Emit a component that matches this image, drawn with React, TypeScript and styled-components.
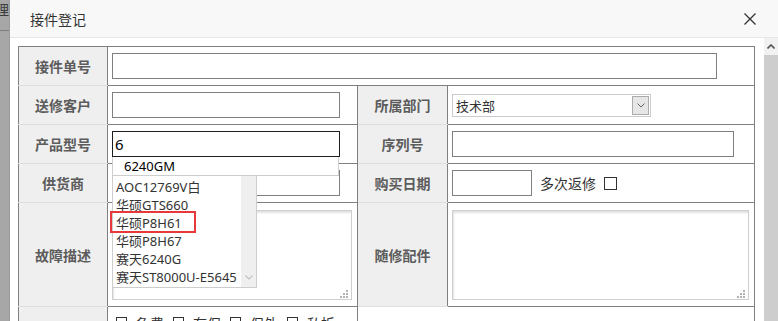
import React from "react";
import styled, { createGlobalStyle } from "styled-components";

const GlobalStyle = createGlobalStyle`
  html, body {
    margin: 0;
    padding: 0;
    background: #fff;
    overflow: hidden;
  }
  body {
    font-family: "Noto Sans", "Noto Sans CJK SC", sans-serif;
  }
`;

const Page = styled.div`
  display: flex;
  width: 778px;
  height: 321px;
  overflow: hidden;
`;

// серый фон страницы за модальным окном
const Backdrop = styled.div`
  width: 10px;
  flex: none;
  background: #a7a7a7;
  border-right: 1px solid #9c9c9c;
  box-sizing: border-box;
  overflow: hidden;
`;

const BackdropText = styled.div`
  margin: 0 0 0 -5px;
  font-size: 14px;
  line-height: 20px;
  color: #3c3c3c;
`;

const BackdropRule = styled.div`
  margin-top: 10px;
  height: 1px;
  background: #7c7c7c;
`;

const Dialog = styled.div`
  flex: 1;
  display: flex;
  flex-direction: column;
  min-width: 0;
`;

const Header = styled.div`
  height: 37px;
  flex: none;
  display: flex;
  align-items: center;
  justify-content: space-between;
  padding: 0 22px 0 20px;
  background: #f8f8f8;
  border-bottom: 1px solid #e6e6e6;
`;

const Title = styled.span`
  font-size: 14px;
  color: #333;
`;

const CloseButton = styled.button`
  border: 0;
  padding: 0;
  background: none;
  width: 12px;
  height: 12px;
  display: flex;
  cursor: pointer;
`;

const Body = styled.div`
  flex: 1;
  display: flex;
  min-height: 0;
`;

const Content = styled.div`
  flex: 1;
  padding: 8px 10px 0 8px;
  overflow: hidden;
`;

const ScrollBar = styled.div`
  width: 14px;
  flex: none;
  display: flex;
  flex-direction: column;
`;

const ScrollArrow = styled.div`
  height: 17px;
  background: #f1f1f1;
  display: flex;
  align-items: center;
  justify-content: center;
`;

const ScrollTrack = styled.div`
  flex: 1;
  background: #cdcdcd;
`;

const FormTable = styled.table`
  border-collapse: collapse;
  table-layout: fixed;
  width: 737px;
`;

const Row = styled.tr<{ $h: number }>`
  height: ${(p) => p.$h}px;
`;

const Label = styled.th<{ $first?: boolean }>`
  background: #efefef;
  border: 1px solid #7f7f7f;
  border-top-color: ${(p) => (p.$first ? "#7f7f7f" : "#dedede")};
  border-bottom-color: #dedede;
  padding: 0;
  font-size: 14px;
  font-weight: 700;
  color: #5c5c5c;
  text-align: center;
`;

const Cell = styled.td<{ $top?: boolean }>`
  border: 1px solid #7f7f7f;
  padding: 0 4px;
  vertical-align: ${(p) => (p.$top ? "top" : "middle")};
`;

const CellInner = styled.div`
  display: flex;
  align-items: center;
`;

const InputWrap = styled.div`
  position: relative;
`;

const TextInput = styled.input<{ $w: number; $focus?: boolean }>`
  box-sizing: border-box;
  width: ${(p) => p.$w}px;
  height: 26px;
  margin: 0;
  padding: 0 2px;
  border: 1px solid ${(p) => (p.$focus ? "#1e1e1e" : "#7f7f7f")};
  outline: none;
  font-family: inherit;
  font-size: 15px;
  color: #000;
  background: #fff;
`;

const Select = styled.div`
  box-sizing: border-box;
  width: 199px;
  height: 23px;
  display: flex;
  align-items: center;
  padding: 0 1px 0 3px;
  border: 1px solid #cbcbcb;
  font-size: 13px;
  color: #333;
`;

const SelectButton = styled.span`
  box-sizing: border-box;
  margin-left: auto;
  width: 17px;
  height: 19px;
  display: flex;
  align-items: center;
  justify-content: center;
  background: #e6e6e6;
  border: 1px solid #ababab;
`;

const InlineText = styled.span`
  margin: 0 8px;
  font-size: 14px;
  color: #333;
  white-space: nowrap;
`;

const CheckBox = styled.span<{ $size: number }>`
  box-sizing: border-box;
  width: ${(p) => p.$size}px;
  height: ${(p) => p.$size}px;
  flex: none;
  border: 1px solid #333;
  background: #fff;
`;

const CheckGroup = styled.div`
  display: flex;
  align-items: flex-start;
  gap: 9px;
  padding: 8px 0 0 4px;
  font-size: 14px;
  line-height: 18px;
  color: #333;
`;

const TextareaWrap = styled.div<{ $w: number }>`
  position: relative;
  width: ${(p) => p.$w}px;
  height: 90px;
`;

const TextArea = styled.textarea`
  box-sizing: border-box;
  display: block;
  width: 100%;
  height: 100%;
  margin: 0;
  resize: none;
  border: 1px solid #cfcfcf;
  box-shadow: inset 1px 2px 2px #e2e2e2;
  outline: none;
`;

const Grip = styled.svg`
  position: absolute;
  right: 4px;
  bottom: 2px;
`;

// выпадающий список автодополнения
const Suggest = styled.div`
  position: absolute;
  top: 100%;
  left: 0;
  z-index: 5;
`;

const SuggestFirst = styled.div`
  box-sizing: border-box;
  width: 227px;
  height: 19px;
  padding-left: 11px;
  border: 1px solid #cdcdcd;
  border-top: 0;
  background: #fff;
  font-size: 13px;
  line-height: 18px;
  color: #000;
`;

const SuggestList = styled.div`
  position: relative;
  box-sizing: border-box;
  width: 145px;
  height: 112px;
  display: flex;
  border: 1px solid #cdcdcd;
  border-top: 0;
  background: #fff;
`;

const SuggestItems = styled.div`
  flex: 1;
  padding-top: 2px;
`;

const SuggestItem = styled.div`
  height: 18px;
  padding-left: 3px;
  font-size: 13px;
  line-height: 18px;
  color: #333;
  white-space: nowrap;
`;

const ListScroll = styled.div`
  width: 15px;
  background: #efefef;
  display: flex;
  align-items: flex-end;
  justify-content: center;
  padding-bottom: 7px;
  box-sizing: border-box;
`;

const Highlight = styled.div`
  position: absolute;
  left: -3px;
  top: 35px;
  box-sizing: border-box;
  width: 86px;
  height: 22px;
  border: 2px solid #e8393a;
`;

const suggestions = [
  "AOC12769V白",
  "华硕GTS660",
  "华硕P8H61",
  "华硕P8H67",
  "赛天6240G",
  "赛天ST8000U-E5645",
];

const flags = ["急费", "在保", "保外", "私拆"];

const GripDots = () => (
  <Grip width="8" height="8" viewBox="0 0 8 8">
    {[
      [6, 0],
      [3, 3],
      [6, 3],
      [0, 6],
      [3, 6],
      [6, 6],
    ].map(([x, y]) => (
      <rect key={`${x}-${y}`} x={x} y={y} width="2" height="2" fill="#b3b3b3" />
    ))}
  </Grip>
);

const App: React.FC = () => {
  return (
    <>
      <GlobalStyle />
      <Page>
        <Backdrop>
          <BackdropText>理</BackdropText>
          <BackdropRule />
        </Backdrop>
        <Dialog>
          <Header>
            <Title>接件登记</Title>
            <CloseButton aria-label="关闭">
              <svg width="12" height="12" viewBox="0 0 12 12">
                <path d="M0.5 0.5L11.5 11.5M11.5 0.5L0.5 11.5" stroke="#333" strokeWidth="1.3" />
              </svg>
            </CloseButton>
          </Header>
          <Body>
            <Content>
              <FormTable>
                <colgroup>
                  <col style={{ width: 89 }} />
                  <col style={{ width: 250 }} />
                  <col style={{ width: 90 }} />
                  <col style={{ width: 307 }} />
                </colgroup>
                <tbody>
                  <Row $h={39}>
                    <Label $first>接件单号</Label>
                    <Cell colSpan={3}>
                      <CellInner>
                        <TextInput $w={605} />
                      </CellInner>
                    </Cell>
                  </Row>
                  <Row $h={39}>
                    <Label>送修客户</Label>
                    <Cell>
                      <CellInner>
                        <TextInput $w={228} />
                      </CellInner>
                    </Cell>
                    <Label>所属部门</Label>
                    <Cell>
                      <CellInner>
                        <Select>
                          技术部
                          <SelectButton>
                            <svg width="8" height="5" viewBox="0 0 8 5">
                              <path d="M0.5 0.5L4 4L7.5 0.5" stroke="#666" fill="none" />
                            </svg>
                          </SelectButton>
                        </Select>
                      </CellInner>
                    </Cell>
                  </Row>
                  <Row $h={39}>
                    <Label>产品型号</Label>
                    <Cell>
                      <CellInner>
                        <InputWrap>
                          <TextInput $w={228} $focus defaultValue="6" />
                          <Suggest>
                            <SuggestFirst>6240GM</SuggestFirst>
                            <SuggestList>
                              <SuggestItems>
                                {suggestions.map((s) => (
                                  <SuggestItem key={s}>{s}</SuggestItem>
                                ))}
                              </SuggestItems>
                              <ListScroll>
                                <svg width="8" height="5" viewBox="0 0 8 5">
                                  <path d="M0.5 0.5L4 4L7.5 0.5" stroke="#c2c2c2" fill="none" strokeWidth="1.2" />
                                </svg>
                              </ListScroll>
                              <Highlight />
                            </SuggestList>
                          </Suggest>
                        </InputWrap>
                      </CellInner>
                    </Cell>
                    <Label>序列号</Label>
                    <Cell>
                      <CellInner>
                        <TextInput $w={282} />
                      </CellInner>
                    </Cell>
                  </Row>
                  <Row $h={39}>
                    <Label>供货商</Label>
                    <Cell>
                      <CellInner>
                        <TextInput $w={228} />
                      </CellInner>
                    </Cell>
                    <Label>购买日期</Label>
                    <Cell>
                      <CellInner>
                        <TextInput $w={80} />
                        <InlineText>多次返修</InlineText>
                        <CheckBox $size={13} />
                      </CellInner>
                    </Cell>
                  </Row>
                  <Row $h={104}>
                    <Label>故障描述</Label>
                    <Cell>
                      <CellInner>
                        <TextareaWrap $w={240}>
                          <TextArea />
                          <GripDots />
                        </TextareaWrap>
                      </CellInner>
                    </Cell>
                    <Label>随修配件</Label>
                    <Cell>
                      <CellInner>
                        <TextareaWrap $w={297}>
                          <TextArea />
                          <GripDots />
                        </TextareaWrap>
                      </CellInner>
                    </Cell>
                  </Row>
                  <Row $h={40}>
                    <Label />
                    <Cell $top>
                      <CheckGroup>
                        {flags.map((f) => (
                          <React.Fragment key={f}>
                            <CheckBox $size={11} style={{ marginTop: 2 }} />
                            <span>{f}</span>
                          </React.Fragment>
                        ))}
                      </CheckGroup>
                    </Cell>
                    <Cell colSpan={2} />
                  </Row>
                </tbody>
              </FormTable>
            </Content>
            <ScrollBar>
              <ScrollArrow>
                <svg width="8" height="5" viewBox="0 0 8 5">
                  <path d="M0.5 4.5L4 1L7.5 4.5" stroke="#555" fill="none" strokeWidth="1.6" />
                </svg>
              </ScrollArrow>
              <ScrollTrack />
            </ScrollBar>
          </Body>
        </Dialog>
      </Page>
    </>
  );
};

export default App;
